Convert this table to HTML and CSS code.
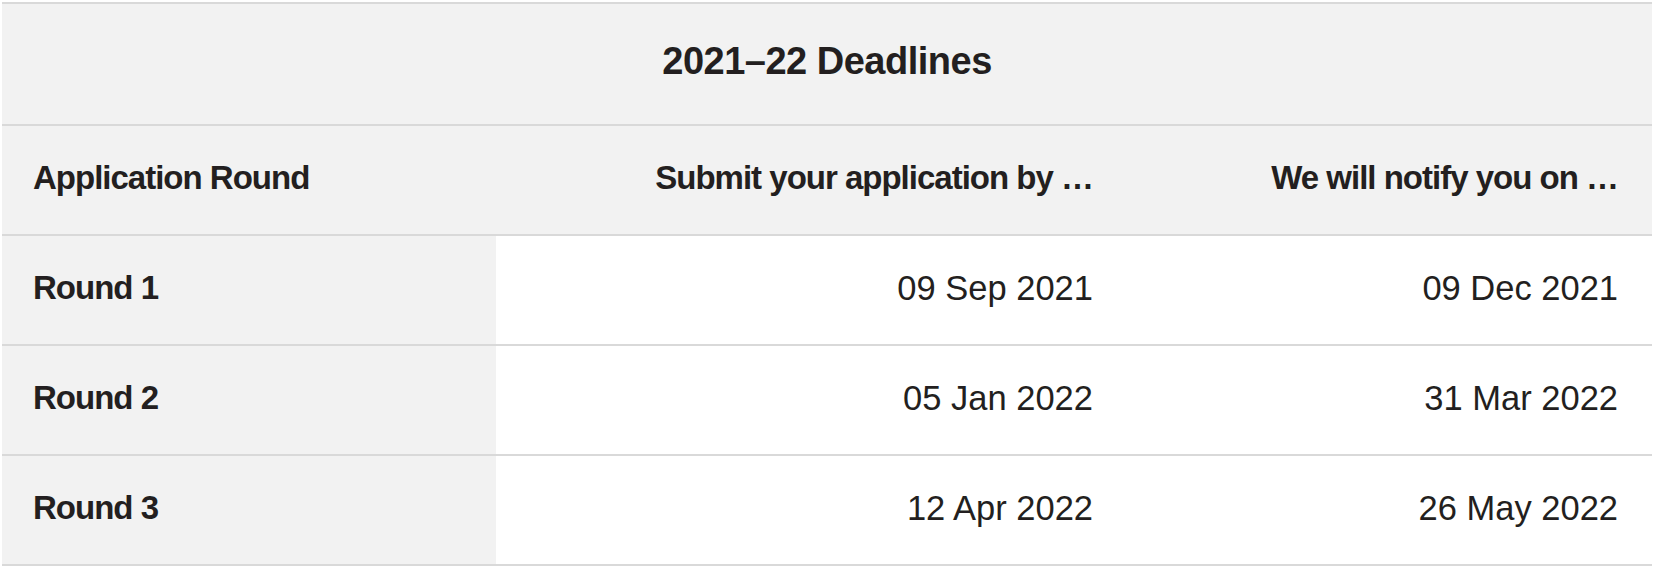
FILE: index.html
```html
<!DOCTYPE html>
<html lang="en">
<head>
<meta charset="utf-8">
<title>2021–22 Deadlines</title>
<link rel="stylesheet" href="styles.css">
</head>
<body>
<table class="deadlines">
  <colgroup>
    <col class="col-round">
    <col class="col-submit">
    <col class="col-notify">
  </colgroup>
  <thead>
    <tr class="title-row">
      <th colspan="3" class="title">2021–22 Deadlines</th>
    </tr>
    <tr class="head-row">
      <th class="c-left">Application Round</th>
      <th class="c-right">Submit your application by …</th>
      <th class="c-right c-last">We will notify you on …</th>
    </tr>
  </thead>
  <tbody>
    <tr>
      <th class="c-left round">Round 1</th>
      <td class="c-right">09 Sep 2021</td>
      <td class="c-right c-last">09 Dec 2021</td>
    </tr>
    <tr>
      <th class="c-left round">Round 2</th>
      <td class="c-right">05 Jan 2022</td>
      <td class="c-right c-last">31 Mar 2022</td>
    </tr>
    <tr>
      <th class="c-left round">Round 3</th>
      <td class="c-right">12 Apr 2022</td>
      <td class="c-right c-last">26 May 2022</td>
    </tr>
  </tbody>
</table>
</body>
</html>
```
FILE: styles.css
```css
html, body {
  margin: 0;
  padding: 0;
  background: #ffffff;
}

body {
  padding: 2px;
  font-family: "Liberation Sans", Arial, sans-serif;
  color: #231f20;
}

.deadlines {
  width: 1650px;
  border-collapse: collapse;
  table-layout: fixed;
  font-size: 35px;
  line-height: 40px;
  border-top: 2px solid #d9d9d9;
}

.col-round { width: 494px; }
.col-submit { width: 631px; }
.col-notify { width: 525px; }

.deadlines tr {
  border-bottom: 2px solid #d9d9d9;
}

.deadlines th,
.deadlines td {
  padding: 0 0 4px 0;
  vertical-align: middle;
}

.title-row th {
  height: 114px;
  padding-bottom: 6px;
  background: #f2f2f2;
  text-align: center;
  font-weight: 700;
  font-size: 38px;
  letter-spacing: -0.5px;
}

.head-row th {
  height: 104px;
  background: #f2f2f2;
  font-weight: 700;
  font-size: 33px;
  letter-spacing: -1px;
}

tbody th,
tbody td {
  height: 104px;
}

tbody th.round {
  background: #f2f2f2;
  font-weight: 700;
  font-size: 33px;
  letter-spacing: -1px;
}

tbody td {
  font-weight: 400;
  background: #ffffff;
  font-size: 34.5px;
}

.c-left {
  text-align: left;
  padding-left: 31px !important;
}

.c-right {
  text-align: right;
  padding-right: 34px !important;
}
```
